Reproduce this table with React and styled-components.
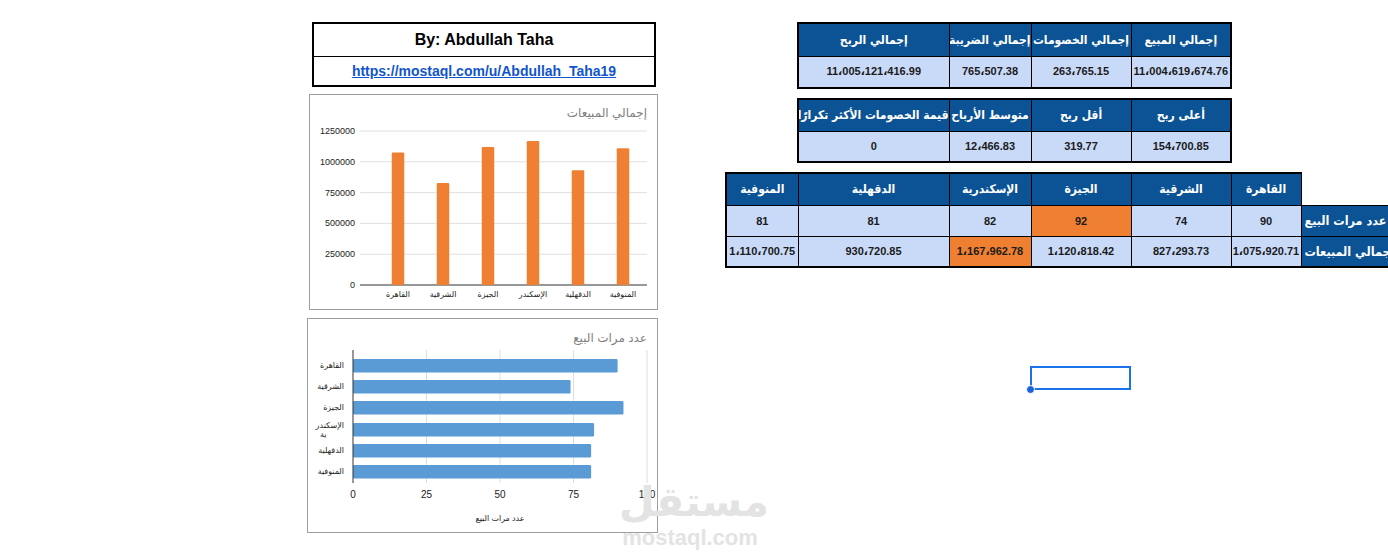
import React from "react";
import styled, { createGlobalStyle } from "styled-components";

const GlobalStyle = createGlobalStyle`
  html, body { margin: 0; padding: 0; background: #ffffff; overflow: hidden; }
  * { box-sizing: border-box; }
`;

const FONT = `"Liberation Sans", "DejaVu Sans", Arial, sans-serif`;
const ARABIC_FONT = `"DejaVu Sans Condensed", "DejaVu Sans", sans-serif`;

const Page = styled.div`
  position: relative;
  width: 1388px;
  height: 560px;
  overflow: hidden;
  display: flex;
  align-items: flex-start;
  padding-left: 307px;
  font-family: ${FONT};
`;

const LeftColumn = styled.div`
  width: 351px;
  flex: none;
  display: flex;
  flex-direction: column;
  padding-top: 22px;
`;

const CreditBox = styled.div`
  margin-left: 5px;
  width: 344px;
  height: 65px;
  border: 2px solid #000;
  display: grid;
  grid-template-rows: 32px 1fr;
`;

const CreditRow = styled.div`
  display: flex;
  align-items: center;
  justify-content: center;
  border-top: ${(p) => (p.$divider ? "1px solid #000" : "none")};
`;

const CreditTitle = styled.span`
  font-size: 16px;
  font-weight: 700;
  color: #000;
`;

const CreditLink = styled.a`
  font-size: 14px;
  font-weight: 700;
  color: #1155cc;
  text-decoration: underline;
`;

const ChartCard = styled.div`
  margin-left: ${(p) => p.$ml}px;
  margin-top: ${(p) => p.$mt}px;
  width: ${(p) => p.$w}px;
  height: ${(p) => p.$h}px;
  border: 1px solid #9e9e9e;
  background: #fff;
  & > svg { display: block; }
`;

const RightColumn = styled.div`
  flex: none;
  margin-left: 67px;
  width: 680px;
  padding-top: 22px;
  display: flex;
  flex-direction: column;
  align-items: flex-start;
`;

const DataTable = styled.table`
  direction: rtl;
  border-collapse: collapse;
  table-layout: fixed;
  width: ${(p) => p.$w}px;
  margin-left: ${(p) => p.$ml || 0}px;
  margin-top: ${(p) => p.$mt || 0}px;
`;

const Col = styled.col`
  width: ${(p) => p.$w}px;
`;

const HeadCell = styled.th`
  height: ${(p) => p.$h || 32}px;
  padding: 0;
  background: ${(p) => (p.$blank ? "#ffffff" : "#0b5394")};
  color: #fff;
  font-family: ${ARABIC_FONT};
  font-stretch: condensed;
  font-size: 12px;
  font-weight: 700;
  text-align: center;
  white-space: nowrap;
  overflow: hidden;
  border: ${(p) => (p.$blank ? "none" : "1px solid #000")};
  border-top-width: ${(p) => (p.$blank ? 0 : 2)}px;
  border-left-width: ${(p) => (p.$edgeL ? 2 : 1)}px;
  border-right-width: ${(p) => (p.$edgeR ? 2 : 1)}px;
`;

const RowLabel = styled.th`
  height: 31px;
  padding: 0 0 0 3px;
  background: #0b5394;
  color: #fff;
  font-family: ${ARABIC_FONT};
  font-stretch: condensed;
  font-size: 12.5px;
  font-weight: 700;
  text-align: left;
  white-space: nowrap;
  overflow: hidden;
  border: 1px solid #000;
  border-bottom-width: ${(p) => (p.$edgeB ? 2 : 1)}px;
`;

const ValueCell = styled.td`
  height: ${(p) => p.$h || 31}px;
  padding: 0;
  background: ${(p) => (p.$hl ? "#ef7f31" : "#c9daf8")};
  color: #1b1b1b;
  font-size: 11px;
  font-weight: 700;
  text-align: center;
  white-space: nowrap;
  overflow: hidden;
  border: 1px solid #000;
  border-bottom-width: ${(p) => (p.$edgeB ? 2 : 1)}px;
  border-left-width: ${(p) => (p.$edgeL ? 2 : 1)}px;
  border-right-width: ${(p) => (p.$edgeR ? 2 : 1)}px;
`;

const SelectionBox = styled.div`
  position: relative;
  margin-top: 98px;
  margin-left: 305px;
  width: 101px;
  height: 24px;
  border: 2px solid #1a73e8;
`;

const FillHandle = styled.span`
  position: absolute;
  left: -6px;
  bottom: -6px;
  width: 9px;
  height: 9px;
  border-radius: 50%;
  background: #1a63d8;
  border: 1px solid #fff;
`;

const Watermark = styled.div`
  position: absolute;
  left: 620px;
  top: 474px;
  width: 140px;
  display: flex;
  flex-direction: column;
  align-items: center;
  color: #e3e3e3;
  pointer-events: none;
`;

const WatermarkArabic = styled.span`
  font-family: "DejaVu Sans", sans-serif;
  font-size: 41px;
  font-weight: 700;
  line-height: 56px;
  margin-left: 8px;
`;

const WatermarkLatin = styled.span`
  font-family: "Liberation Sans", Arial, sans-serif;
  font-size: 22px;
  font-weight: 700;
  line-height: 22px;
  margin-top: -3px;
`;

/* ---------- charts ---------- */

const regions = ["القاهرة", "الشرقية", "الجيزة", "الإسكندر", "الدقهلية", "المنوفية"];
const salesTotals = [1075920.71, 827293.73, 1120818.42, 1167962.78, 930720.85, 1110700.75];
const salesCounts = [90, 74, 92, 82, 81, 81];

function ColumnChart() {
  const top = 36;
  const zero = 190;
  const max = 1250000;
  const ticks = [1250000, 1000000, 750000, 500000, 250000, 0];
  const centers = [88, 133, 178, 223, 268, 313];
  return (
    <svg width="347" height="214" viewBox="0 0 347 214" fontFamily={FONT}>
      <text x="337" y="22" textAnchor="end" fontSize="12" fill="#808080">
        إجمالي المبيعات
      </text>
      {ticks.map((t) => {
        const y = zero - (t / max) * (zero - top);
        return (
          <g key={t}>
            <line x1="50" x2="337" y1={y} y2={y} stroke={t === 0 ? "#333" : "#e0e0e0"} strokeWidth="1" />
            <text x="45" y={y + 3} textAnchor="end" fontSize="9" fill="#222">
              {t}
            </text>
          </g>
        );
      })}
      {salesTotals.map((v, i) => {
        const h = (v / max) * (zero - top);
        return (
          <rect key={i} x={centers[i] - 6.25} y={zero - h} width="12.5" height={h} rx="1.2" fill="#ef8033" />
        );
      })}
      {regions.map((r, i) => (
        <text key={r} x={centers[i]} y="202" textAnchor="middle" fontSize="8" fill="#222">
          {r}
        </text>
      ))}
    </svg>
  );
}

function HorizontalBarChart() {
  const x0 = 45;
  const scale = 2.94;
  const tops = [40, 61, 82, 104, 125, 146];
  const labels = ["القاهرة", "الشرقية", "الجيزة", null, "الدقهلية", "المنوفية"];
  return (
    <svg width="349" height="213" viewBox="0 0 349 213" fontFamily={FONT}>
      <text x="339" y="23" textAnchor="end" fontSize="12" fill="#808080">
        عدد مرات البيع
      </text>
      {[25, 50, 75, 100].map((t) => (
        <line key={t} x1={x0 + t * scale} x2={x0 + t * scale} y1="31" y2="164" stroke="#dedede" strokeWidth="1" />
      ))}
      {salesCounts.map((v, i) => (
        <rect key={i} x={x0} y={tops[i]} width={v * scale} height="13.5" rx="1.2" fill="#5b9bd5" />
      ))}
      <line x1={x0} x2={x0} y1="31" y2="164" stroke="#333" strokeWidth="1" />
      {labels.map((l, i) =>
        l ? (
          <text key={i} x="36" y={tops[i] + 9} textAnchor="end" fontSize="8" fill="#222">
            {l}
          </text>
        ) : (
          <g key={i}>
            <text x="36" y={tops[i] + 5} textAnchor="end" fontSize="8" fill="#222">
              الإسكندر
            </text>
            <text x="12" y={tops[i] + 14} textAnchor="start" fontSize="8" fill="#222">
              ية
            </text>
          </g>
        )
      )}
      {[0, 25, 50, 75, 100].map((t) => (
        <text key={t} x={x0 + t * scale} y="179" textAnchor="middle" fontSize="10" fill="#222">
          {t}
        </text>
      ))}
      <text x="192" y="202" textAnchor="middle" fontSize="8" fill="#222">
        عدد مرات البيع
      </text>
    </svg>
  );
}

/* ---------- tables ---------- */

const summaryWidths = [100, 100, 82, 151];

const summary1 = [
  { h: "إجمالي المبيع", v: "11،004،619،674.76" },
  { h: "إجمالي الخصومات", v: "263،765.15" },
  { h: "إجمالي الضريبة", v: "765،507.38" },
  { h: "إجمالي الربح", v: "11،005،121،416.99" },
];

const summary2 = [
  { h: "أعلى ربح", v: "154،700.85" },
  { h: "أقل ربح", v: "319.77" },
  { h: "متوسط الأرباح", v: "12،466.83" },
  { h: "قيمة الخصومات الأكثر تكرارًا", v: "0" },
];

const cityWidths = [100, 70, 100, 100, 82, 151, 72];
const cityCols = ["القاهرة", "الشرقية", "الجيزة", "الإسكندرية", "الدقهلية", "المنوفية"];

const cityRows = [
  { label: "عدد مرات البيع", values: ["90", "74", "92", "82", "81", "81"], hl: 2 },
  {
    label: "إجمالي المبيعات",
    values: ["1،075،920.71", "827،293.73", "1،120،818.42", "1،167،962.78", "930،720.85", "1،110،700.75"],
    hl: 3,
  },
];

const sum = (a) => a.reduce((s, n) => s + n, 0);

function SummaryTable({ items, mt, headH, rowH }) {
  const last = items.length - 1;
  return (
    <DataTable $ml={72} $mt={mt} $w={sum(summaryWidths)}>
      <colgroup>
        {summaryWidths.map((w, i) => (
          <Col key={i} $w={w} />
        ))}
      </colgroup>
      <thead>
        <tr>
          {items.map((it, i) => (
            <HeadCell key={it.h} $h={headH} $edgeR={i === 0} $edgeL={i === last}>
              {it.h}
            </HeadCell>
          ))}
        </tr>
      </thead>
      <tbody>
        <tr>
          {items.map((it, i) => (
            <ValueCell key={it.h} $h={rowH} $edgeB $edgeR={i === 0} $edgeL={i === last}>
              {it.v}
            </ValueCell>
          ))}
        </tr>
      </tbody>
    </DataTable>
  );
}

function CityTable() {
  const last = cityCols.length - 1;
  const lastRow = cityRows.length - 1;
  return (
    <DataTable $mt={9} $w={sum(cityWidths)}>
      <colgroup>
        {cityWidths.map((w, i) => (
          <Col key={i} $w={w} />
        ))}
      </colgroup>
      <thead>
        <tr>
          <HeadCell $blank />
          {cityCols.map((c, i) => (
            <HeadCell key={c} $edgeL={i === last}>
              {c}
            </HeadCell>
          ))}
        </tr>
      </thead>
      <tbody>
        {cityRows.map((row, r) => (
          <tr key={row.label}>
            <RowLabel $edgeB={r === lastRow}>{row.label}</RowLabel>
            {row.values.map((v, i) => (
              <ValueCell key={i} $hl={row.hl === i} $edgeL={i === last} $edgeB={r === lastRow}>
                {v}
              </ValueCell>
            ))}
          </tr>
        ))}
      </tbody>
    </DataTable>
  );
}

export default function App() {
  return (
    <>
      <GlobalStyle />
      <Page>
        <LeftColumn>
          <CreditBox>
            <CreditRow>
              <CreditTitle>By: Abdullah Taha</CreditTitle>
            </CreditRow>
            <CreditRow $divider>
              <CreditLink href="#">https://mostaql.com/u/Abdullah_Taha19</CreditLink>
            </CreditRow>
          </CreditBox>
          <ChartCard $ml={2} $mt={7} $w={349} $h={216}>
            <ColumnChart />
          </ChartCard>
          <ChartCard $ml={0} $mt={8} $w={351} $h={215}>
            <HorizontalBarChart />
          </ChartCard>
        </LeftColumn>
        <RightColumn>
          <SummaryTable items={summary1} mt={0} headH={33} rowH={32} />
          <SummaryTable items={summary2} mt={9} headH={32} rowH={31} />
          <CityTable />
          <SelectionBox>
            <FillHandle />
          </SelectionBox>
        </RightColumn>
        <Watermark>
          <WatermarkArabic>مستقل</WatermarkArabic>
          <WatermarkLatin>mostaql.com</WatermarkLatin>
        </Watermark>
      </Page>
    </>
  );
}
